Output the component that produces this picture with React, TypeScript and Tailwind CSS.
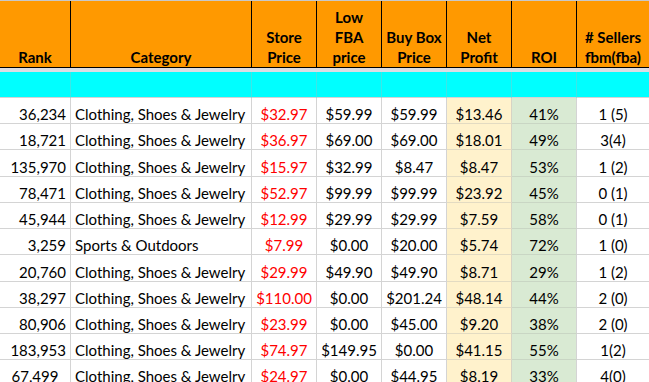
import React from "react";

type Row = {
  rank: string;
  category: string;
  store: string;
  lowFba: string;
  buyBox: string;
  net: string;
  roi: string;
  sellers: string;
  h: string;
  centerRank?: boolean;
};

const CLOTHING = "Clothing, Shoes & Jewelry";

const rows: Row[] = [
  { rank: "36,234", category: CLOTHING, store: "$32.97", lowFba: "$59.99", buyBox: "$59.99", net: "$13.46", roi: "41%", sellers: "1 (5)", h: "h-[26px]" },
  { rank: "18,721", category: CLOTHING, store: "$36.97", lowFba: "$69.00", buyBox: "$69.00", net: "$18.01", roi: "49%", sellers: "3(4)", h: "h-[26px]" },
  { rank: "135,970", category: CLOTHING, store: "$15.97", lowFba: "$32.99", buyBox: "$8.47", net: "$8.47", roi: "53%", sellers: "1 (2)", h: "h-[27px]" },
  { rank: "78,471", category: CLOTHING, store: "$52.97", lowFba: "$99.99", buyBox: "$99.99", net: "$23.92", roi: "45%", sellers: "0 (1)", h: "h-[26px]" },
  { rank: "45,944", category: CLOTHING, store: "$12.99", lowFba: "$29.99", buyBox: "$29.99", net: "$7.59", roi: "58%", sellers: "0 (1)", h: "h-[26px]" },
  { rank: "3,259", category: "Sports & Outdoors", store: "$7.99", lowFba: "$0.00", buyBox: "$20.00", net: "$5.74", roi: "72%", sellers: "1 (0)", h: "h-[26px]" },
  { rank: "20,760", category: CLOTHING, store: "$29.99", lowFba: "$49.90", buyBox: "$49.90", net: "$8.71", roi: "29%", sellers: "1 (2)", h: "h-[27px]" },
  { rank: "38,297", category: CLOTHING, store: "$110.00", lowFba: "$0.00", buyBox: "$201.24", net: "$48.14", roi: "44%", sellers: "2 (0)", h: "h-[26px]" },
  { rank: "80,906", category: CLOTHING, store: "$23.99", lowFba: "$0.00", buyBox: "$45.00", net: "$9.20", roi: "38%", sellers: "2 (0)", h: "h-[26px]" },
  { rank: "183,953", category: CLOTHING, store: "$74.97", lowFba: "$149.95", buyBox: "$0.00", net: "$41.15", roi: "55%", sellers: "1(2)", h: "h-[26px]" },
  { rank: "67,499", category: CLOTHING, store: "$24.97", lowFba: "$0.00", buyBox: "$44.95", net: "$8.19", roi: "33%", sellers: "4(0)", h: "h-[26px]", centerRank: true },
];

const grid = "grid grid-cols-[71px_181px_65px_65px_65px_65px_65px_1fr]";

// header cell: bold, bottom aligned, black separators
function Head({ lines, last }: { lines: string[]; last?: boolean }) {
  return (
    <div
      className={`flex flex-col items-center justify-end border-b border-black text-center font-bold leading-[20px] ${
        last ? "" : "border-r"
      }`}
    >
      {lines.map((l) => (
        <span key={l}>{l}</span>
      ))}
    </div>
  );
}

function Cell({
  children,
  align = "center",
  tone = "plain",
  red,
  last,
}: {
  children?: React.ReactNode;
  align?: "left" | "right" | "center";
  tone?: "plain" | "net" | "roi";
  red?: boolean;
  last?: boolean;
}) {
  const alignCls =
    align === "left" ? "justify-start pl-[4px]" : align === "right" ? "justify-end pr-[4px]" : "justify-center";
  const toneCls =
    tone === "net"
      ? "bg-[#fff2cc] border-b-[#e3dbc2] border-r-[#d7d3c4]"
      : tone === "roi"
      ? "bg-[#d9ead3] border-b-[#c9d6c4] border-r-[#d4d4d4]"
      : "border-b-[#d4d4d4] border-r-[#d4d4d4]";
  return (
    <div
      className={`flex items-end overflow-hidden whitespace-nowrap border-b leading-[18px] ${last ? "" : "border-r"} ${alignCls} ${toneCls} ${
        red ? "text-[#ff0000]" : "text-black"
      }`}
    >
      {children}
    </div>
  );
}

export default function App() {
  return (
    <div className="h-[382px] w-[649px] overflow-hidden bg-white font-['Lato','Noto_Sans',sans-serif] text-[15px] text-black">
      <div className="h-px bg-[#c8c8c8]" />

      <div className={`${grid} h-[67px] bg-[#ff9900]`}>
        <Head lines={["Rank"]} />
        <Head lines={["Category"]} />
        <Head lines={["Store", "Price"]} />
        <Head lines={["Low", "FBA", "price"]} />
        <Head lines={["Buy Box", "Price"]} />
        <Head lines={["Net", "Profit"]} />
        <Head lines={["ROI"]} />
        <Head lines={["# Sellers", "fbm(fba)"]} last />
      </div>

      <div className="h-[4px] bg-[#dcdde3]" />

      <div className={`${grid} h-[26px] bg-[#00ffff]`}>
        {Array.from({ length: 8 }).map((_, i) => (
          <div key={i} className={`border-b border-b-[#d4d4d4] ${i < 7 ? "border-r border-r-[#3de6e6]" : ""}`} />
        ))}
      </div>

      {rows.map((r) => (
        <div key={r.rank} className={`${grid} ${r.h}`}>
          <Cell align={r.centerRank ? "center" : "right"}>{r.rank}</Cell>
          <Cell align="left">{r.category}</Cell>
          <Cell red>{r.store}</Cell>
          <Cell>{r.lowFba}</Cell>
          <Cell>{r.buyBox}</Cell>
          <Cell tone="net">{r.net}</Cell>
          <Cell tone="roi">{r.roi}</Cell>
          <Cell last>{r.sellers}</Cell>
        </div>
      ))}
    </div>
  );
}
